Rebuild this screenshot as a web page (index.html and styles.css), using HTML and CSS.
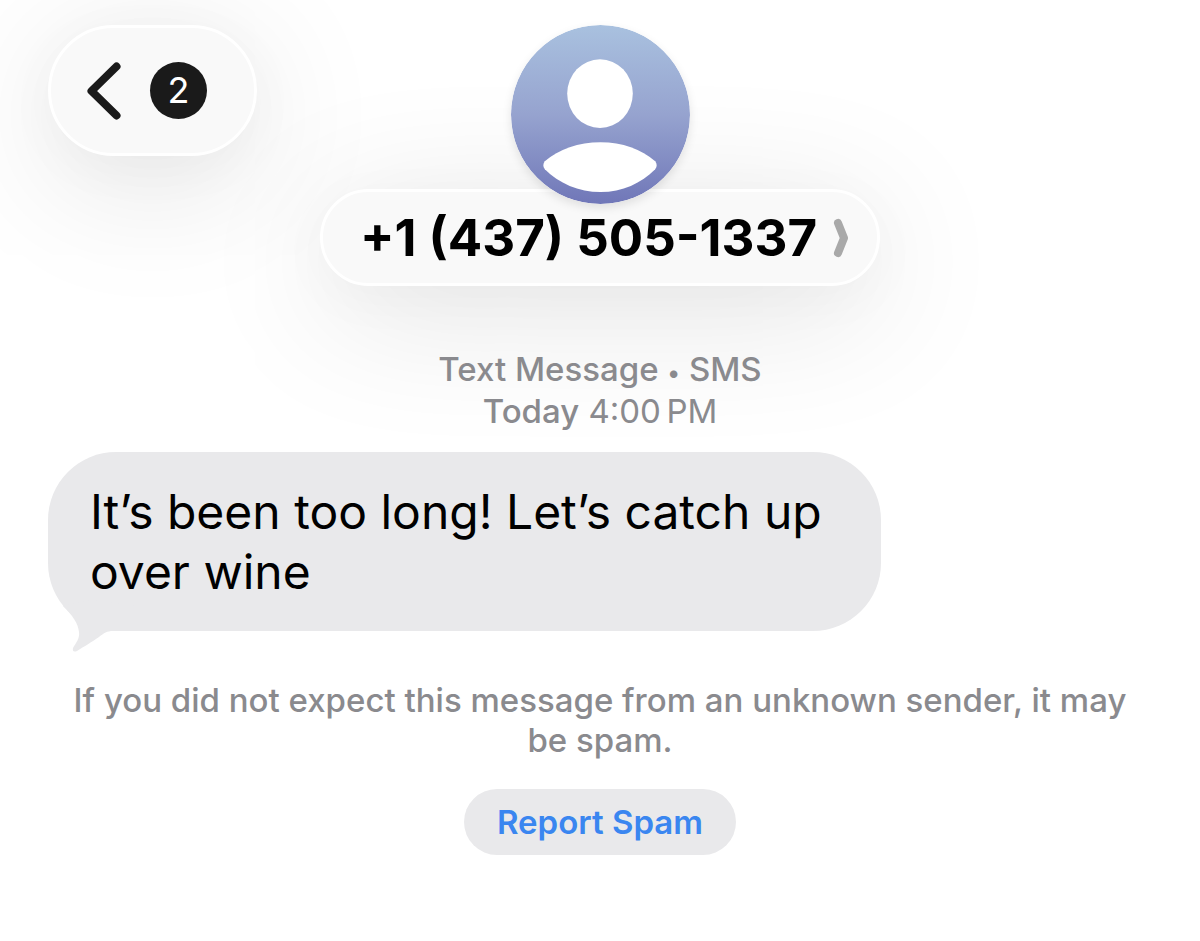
FILE: index.html
```html
<!DOCTYPE html>
<html lang="en">
<head>
<meta charset="UTF-8">
<meta name="viewport" content="width=device-width, initial-scale=1.0">
<title>Messages</title>
<link rel="stylesheet" href="styles.css">
</head>
<body>
<header class="top">
    <button type="button" class="glass back" aria-label="Back, 2 unread">
        <svg class="back-icon" viewBox="0 0 34 58" aria-hidden="true">
            <path d="M29.500 4.500 L4.500 29 L29.500 53.500"/>
        </svg>
        <span class="badge">2</span>
    </button>

    <div class="contact">
        <svg class="avatar" viewBox="0 0 180 180" aria-hidden="true">
            <defs>
                <linearGradient id="sky" x1="0" y1="0" x2="0" y2="1">
                    <stop offset="0" stop-color="#a9c1df"/>
                    <stop offset="0.5" stop-color="#96a3cf"/>
                    <stop offset="1" stop-color="#7077b8"/>
                </linearGradient>
            </defs>
            <circle cx="90" cy="90" r="90" fill="url(#sky)"/>
            <ellipse cx="89.500" cy="69" rx="33" ry="34.500" fill="#fff"/>
            <path d="M34 137 C48 125 68 118 90 118 C112 118 131 125 145 137 Q148 141 145 145 C131 159 112 168 90 168 C68 168 48 159 34 145 Q31 141 34 137 Z" fill="#fff"/>
        </svg>
        <button type="button" class="glass name">
            +1 (437) 505-1337
            <svg class="name-icon" viewBox="0 0 16 40" aria-hidden="true">
                <path d="M5 5 L11 20 L5 35"/>
            </svg>
        </button>
    </div>
</header>

<main class="thread">
    <p class="meta"><b>Text Message <span class="dot">•</span> SMS</b><br><b>Today</b> 4:00&#8198;PM</p>

    <div class="bubble">
        It’s been too long! Let’s catch up over wine
        <svg class="tail" viewBox="0 0 64 46" aria-hidden="true">
            <path d="M20 -6 L64 0 L64 25 L40 25 C34 25 31 27 26 31 C19 36 10 41 4 45 Q-1 47 0 42 C3 37 7 32 6 26 C5 17 0 10 -10 0 Z"/>
        </svg>
    </div>

    <p class="note">If you did not expect this message from an unknown sender, it may be spam.</p>
    <button type="button" class="report">Report Spam</button>
</main>
</body>
</html>
```

FILE: styles.css
```css
* {
    box-sizing: border-box;
}

body {
    margin: 0;
    background: #fff;
    color: #000;
    font-family: Inter, "Liberation Sans", sans-serif;
}

button {
    border: none;
    padding: 0;
    font-family: inherit;
    cursor: pointer;
}

/* Header */
.top {
    display: grid;
    grid-template-columns: 1fr auto 1fr;
    align-items: start;
    padding: 25px 48px 0;
}

.glass {
    display: flex;
    align-items: center;
    background: #f9f9f9;
    border: 3px solid #fff;
    box-shadow: 0 24px 144px rgba(0, 0, 0, 0.12), 0 12px 56px rgba(0, 0, 0, 0.03);
}

.back {
    justify-self: start;
    gap: 29px;
    height: 131px;
    padding: 0 47px 0 36px;
    border-radius: 66px;
}

.back-icon {
    width: 34px;
    height: 58px;
}

.back-icon path {
    fill: none;
    stroke: #1a1a1a;
    stroke-width: 8;
    stroke-linecap: round;
    stroke-linejoin: round;
}

.badge {
    width: 57px;
    height: 57px;
    border-radius: 50%;
    background: #1a1a1a;
    color: #fff;
    font-size: 36px;
    line-height: 57px;
    text-align: center;
}

.contact {
    display: flex;
    flex-direction: column;
    align-items: center;
}

.avatar {
    z-index: 1;
    width: 179px;
    height: 179px;
    border-radius: 50%;
    box-shadow: 0 4px 10px rgba(0, 0, 0, 0.1);
}

.name {
    gap: 16px;
    height: 97px;
    margin-top: -15px;
    padding: 0 28px 0 37px;
    border-radius: 49px;
    color: #000;
    font-size: 51px;
    font-weight: 700;
}

.name-icon {
    width: 16px;
    height: 40px;
}

.name-icon path {
    fill: none;
    stroke: #a9a9a9;
    stroke-width: 8;
    stroke-linecap: round;
    stroke-linejoin: round;
}

/* Conversation */
.thread {
    display: flex;
    flex-direction: column;
    align-items: center;
    padding: 62px 48px 48px;
}

.meta,
.note {
    margin: 0;
    color: #8a8a8e;
    font-size: 33px;
    text-align: center;
}

.meta {
    line-height: 42px;
}

.meta b {
    font-weight: 500;
}

.dot {
    font-size: 24px;
    line-height: 1;
}

.bubble {
    position: relative;
    align-self: flex-start;
    max-width: 833px;
    margin-top: 20px;
    padding: 30px 42px 29px;
    border-radius: 68px;
    background: #e9e9eb;
    font-size: 48px;
    line-height: 60px;
}

.tail {
    position: absolute;
    left: 25px;
    bottom: -21px;
    width: 64px;
    height: 46px;
    overflow: visible;
    fill: #e9e9eb;
}

.note {
    margin-top: 49px;
    padding: 0 16px;
    font-weight: 500;
    line-height: 40px;
}

.report {
    height: 66px;
    margin-top: 29px;
    padding: 0 33px;
    border-radius: 33px;
    background: #e9e9eb;
    color: #3a86f0;
    font-size: 33px;
    font-weight: 600;
}
```
